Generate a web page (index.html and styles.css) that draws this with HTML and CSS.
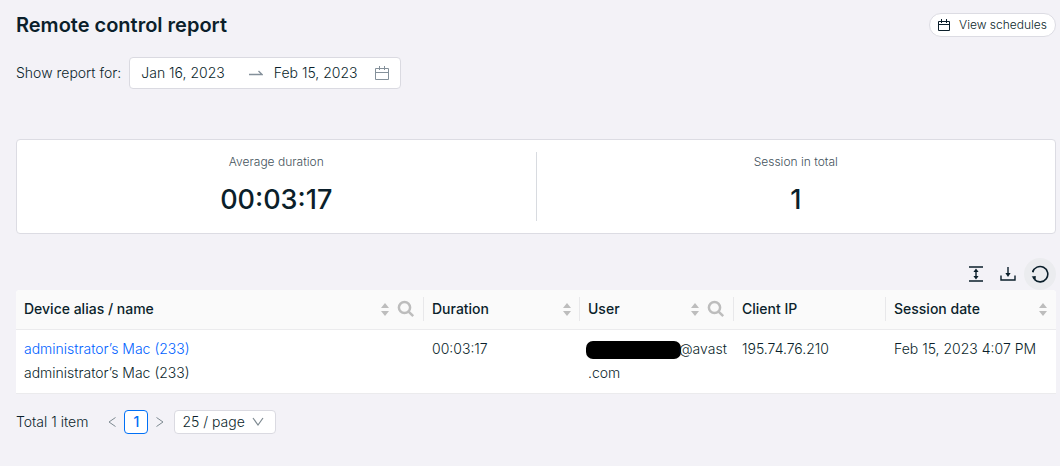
FILE: index.html
```html
<!DOCTYPE html>
<html lang="en">
<head>
    <meta charset="UTF-8">
    <meta name="viewport" content="width=device-width, initial-scale=1.0">
    <title>Remote control report</title>
    <link rel="stylesheet" href="styles.css">
</head>
<body>
    <main class="page">
        <header class="page-header">
            <h1>Remote control report</h1>
            <button type="button" class="btn-schedules">
                <svg width="12" height="12" viewBox="0 0 12 12" fill="none" stroke="currentColor"><path d="M.5 2.5h11v9H.5zM.5 5.5h11M3.5 0v4M8.5 0v4"/></svg>
                View schedules
            </button>
        </header>

        <form class="filter">
            <label for="date-from">Show report for:</label>
            <div class="range">
                <input type="text" id="date-from" class="range-input" value="Jan 16, 2023">
                <svg class="range-arrow" width="14" height="8" viewBox="0 0 14 8" fill="none" stroke="currentColor" stroke-width="1.3"><path d="M0 5.5h13L9.5 2"/></svg>
                <input type="text" id="date-to" class="range-input" value="Feb 15, 2023" aria-label="End date">
                <svg width="14" height="14" viewBox="0 0 14 14" fill="none" stroke="currentColor"><path d="M.5 2.5h13v11H.5zM.5 6.5h13M4.5 0v4M9.5 0v4"/></svg>
            </div>
        </form>

        <section class="stats">
            <div class="stat">
                <p class="stat-label">Average duration</p>
                <p class="stat-value">00:03:17</p>
            </div>
            <div class="stat">
                <p class="stat-label">Session in total</p>
                <p class="stat-value">1</p>
            </div>
        </section>

        <div class="toolbar">
            <button type="button" class="tool" aria-label="Row height">
                <svg width="14" height="16" viewBox="0 0 14 16" fill="none" stroke="currentColor" stroke-width="1.4"><path d="M0 1h14M0 15h14M7 4v8"/><path d="M7 2.6 9.6 6H4.4zM7 13.4 9.6 10H4.4z" fill="currentColor" stroke="none"/></svg>
            </button>
            <button type="button" class="tool" aria-label="Download">
                <svg width="16" height="16" viewBox="0 0 16 16" fill="none" stroke="currentColor" stroke-width="1.4"><path d="M1 9.5V14h14V9.5M8 1v7"/><path d="M8 11 10.6 7H5.4z" fill="currentColor" stroke="none"/></svg>
            </button>
            <button type="button" class="tool tool-active" aria-label="Refresh">
                <svg width="18" height="18" viewBox="0 0 18 18" fill="none" stroke="currentColor" stroke-width="1.6"><path d="M1.7 7A7.7 7.7 0 1 1 3.5 14.5"/><path d="M.6 11.4 4.8 11 4.6 15.2z" fill="currentColor" stroke="none"/><path d="M1.7 7.2 2.2 5.6M2.2 12.2l1.6 2.4"/></svg>
            </button>
        </div>

        <table class="sessions">
            <thead>
                <tr>
                    <th class="col-device">
                        <div class="th">
                            <span>Device alias / name</span>
                            <svg class="sort" width="8" height="13" viewBox="0 0 8 13"><path d="M4 0l4 5H0zM4 13l4-5H0z"/></svg>
                            <svg class="search" width="18" height="18" viewBox="0 0 18 18"><circle cx="7.5" cy="7.5" r="5.6"/><path d="M11.6 11.6l4.6 4.6"/></svg>
                        </div>
                    </th>
                    <th class="col-duration">
                        <div class="th">
                            <span>Duration</span>
                            <svg class="sort" width="8" height="13" viewBox="0 0 8 13"><path d="M4 0l4 5H0zM4 13l4-5H0z"/></svg>
                        </div>
                    </th>
                    <th class="col-user">
                        <div class="th">
                            <span>User</span>
                            <svg class="sort" width="8" height="13" viewBox="0 0 8 13"><path d="M4 0l4 5H0zM4 13l4-5H0z"/></svg>
                            <svg class="search" width="18" height="18" viewBox="0 0 18 18"><circle cx="7.5" cy="7.5" r="5.6"/><path d="M11.6 11.6l4.6 4.6"/></svg>
                        </div>
                    </th>
                    <th class="col-ip">
                        <div class="th"><span>Client IP</span></div>
                    </th>
                    <th class="col-date">
                        <div class="th">
                            <span>Session date</span>
                            <svg class="sort" width="8" height="13" viewBox="0 0 8 13"><path d="M4 0l4 5H0zM4 13l4-5H0z"/></svg>
                        </div>
                    </th>
                </tr>
            </thead>
            <tbody>
                <tr>
                    <td><a href="#">administrator’s Mac (233)</a><br>administrator’s Mac (233)</td>
                    <td>00:03:17</td>
                    <td><span class="redacted"></span>@avast<br>.com</td>
                    <td>195.74.76.210</td>
                    <td>Feb 15, 2023 4:07 PM</td>
                </tr>
            </tbody>
        </table>

        <nav class="pagination">
            <span class="total">Total 1 item</span>
            <button type="button" class="page-arrow" aria-label="Previous page">
                <svg width="8" height="12" viewBox="0 0 8 12" fill="none" stroke="currentColor"><path d="M7.5 1.5 1 6l6.5 4.5"/></svg>
            </button>
            <button type="button" class="page-number">1</button>
            <button type="button" class="page-arrow" aria-label="Next page">
                <svg width="8" height="12" viewBox="0 0 8 12" fill="none" stroke="currentColor"><path d="M.5 1.5 7 6 .5 10.5"/></svg>
            </button>
            <div class="page-size">
                <select aria-label="Page size">
                    <option>25 / page</option>
                </select>
                <svg width="12" height="10" viewBox="0 0 12 10" fill="none" stroke="currentColor" stroke-width="1.2"><path d="M1 1l5 7 5-7"/></svg>
            </div>
        </nav>
    </main>
</body>
</html>
```
FILE: styles.css
```css
*
{
    box-sizing: border-box;
    margin: 0;
    padding: 0;
}
body
{
    background-color: #f3f2f7;
    color: #0b1f2b;
    font-family: Inter, "Liberation Sans", sans-serif;
    font-size: 14px;
    font-weight: 300;
    line-height: 24px;
}
button, input, select
{
    font: inherit;
    color: inherit;
}
svg
{
    flex: none;
}
.page
{
    padding: 8px 4px 16px 16px;
}
.page-header
{
    display: flex;
    justify-content: space-between;
    align-items: center;
    height: 33px;
}
h1
{
    font-size: 20px;
    font-weight: 600;
}
.btn-schedules
{
    display: flex;
    align-items: center;
    gap: 9px;
    height: 24px;
    padding: 0 8px;
    background-color: #fff;
    border: 1px solid #dcdce3;
    border-radius: 12px;
    font-size: 12px;
    cursor: pointer;
}
.filter
{
    display: flex;
    align-items: center;
    gap: 8px;
    margin-top: 16px;
}
.range
{
    display: flex;
    align-items: center;
    width: 272px;
    height: 32px;
    padding: 0 11px;
    background-color: #fff;
    border: 1px solid #dadae1;
    border-radius: 4px;
    color: #84909a;
}
.range-input
{
    flex: 1;
    min-width: 0;
    border: none;
    outline: none;
    background: transparent;
    color: #0b1f2b;
}
.range-arrow
{
    margin: 0 11px 0 6px;
}
.stats
{
    display: flex;
    margin-top: 50px;
    padding: 12px 0;
    background-color: #fff;
    border: 1px solid #dcdce3;
    border-radius: 4px;
    text-align: center;
}
.stat
{
    flex: 1;
    height: 69px;
}
.stat + .stat
{
    border-left: 1px solid #d8dbe0;
}
.stat-label
{
    line-height: 20px;
    font-size: 12px;
    color: #43525b;
}
.stat-value
{
    margin-top: 8px;
    line-height: 40px;
    font-size: 27px;
    font-weight: 500;
}
.toolbar
{
    display: flex;
    justify-content: flex-end;
    margin-top: 24px;
}
.tool
{
    display: flex;
    align-items: center;
    justify-content: center;
    width: 32px;
    height: 32px;
    border: none;
    border-radius: 50%;
    background: transparent;
    cursor: pointer;
}
.tool-active
{
    background-color: #ebecef;
}
.sessions
{
    width: 100%;
    table-layout: fixed;
    border-collapse: separate;
    border-spacing: 0;
    background-color: #fff;
    border-radius: 4px 4px 0 0;
}
.col-duration
{
    width: 156px;
}
.col-user
{
    width: 154px;
}
.col-ip
{
    width: 152px;
}
.col-date
{
    width: 170px;
}
th
{
    padding: 7px 0 8px;
    background-color: #fafafa;
    border-bottom: 1px solid #ebebed;
    font-weight: 500;
    text-align: left;
}
th:first-child
{
    border-top-left-radius: 4px;
}
th:last-child
{
    border-top-right-radius: 4px;
}
.th
{
    display: flex;
    align-items: center;
    gap: 8px;
    height: 24px;
    padding: 0 8px;
    border-right: 1px solid #e8e8ea;
}
.col-date .th
{
    padding-right: 9px;
    border-right: none;
}
.th span
{
    flex: 1;
}
.sort
{
    fill: #bdbdbd;
}
.search
{
    fill: none;
    stroke: #bdbdbd;
    stroke-width: 2.5;
}
td
{
    padding: 7px 8px 8px;
    border-bottom: 1px solid #ebebed;
    vertical-align: top;
    white-space: nowrap;
}
td a
{
    color: #0062ff;
    text-decoration: none;
}
.redacted
{
    display: inline-block;
    width: 95px;
    height: 18px;
    margin: 0 -2px;
    background-color: #000;
    border-radius: 7px;
    vertical-align: middle;
}
.pagination
{
    display: flex;
    align-items: center;
    margin-top: 16px;
}
.total
{
    margin-right: 12px;
}
.page-arrow
{
    display: flex;
    align-items: center;
    justify-content: center;
    width: 24px;
    height: 24px;
    border: none;
    background: transparent;
    color: #7d8990;
}
.page-number
{
    width: 24px;
    height: 24px;
    background-color: #fff;
    border: 1px solid #0070f6;
    border-radius: 4px;
    color: #0070f6;
    font-weight: 500;
    line-height: 22px;
}
.page-size
{
    display: flex;
    align-items: center;
    margin-left: 2px;
    color: #7d8990;
}
.page-size select
{
    appearance: none;
    width: 102px;
    height: 24px;
    padding: 0 24px 0 7px;
    background-color: #fff;
    border: 1px solid #dadae1;
    border-radius: 4px;
    color: #0b1f2b;
    line-height: 22px;
}
.page-size svg
{
    margin-left: -24px;
    pointer-events: none;
}
```
